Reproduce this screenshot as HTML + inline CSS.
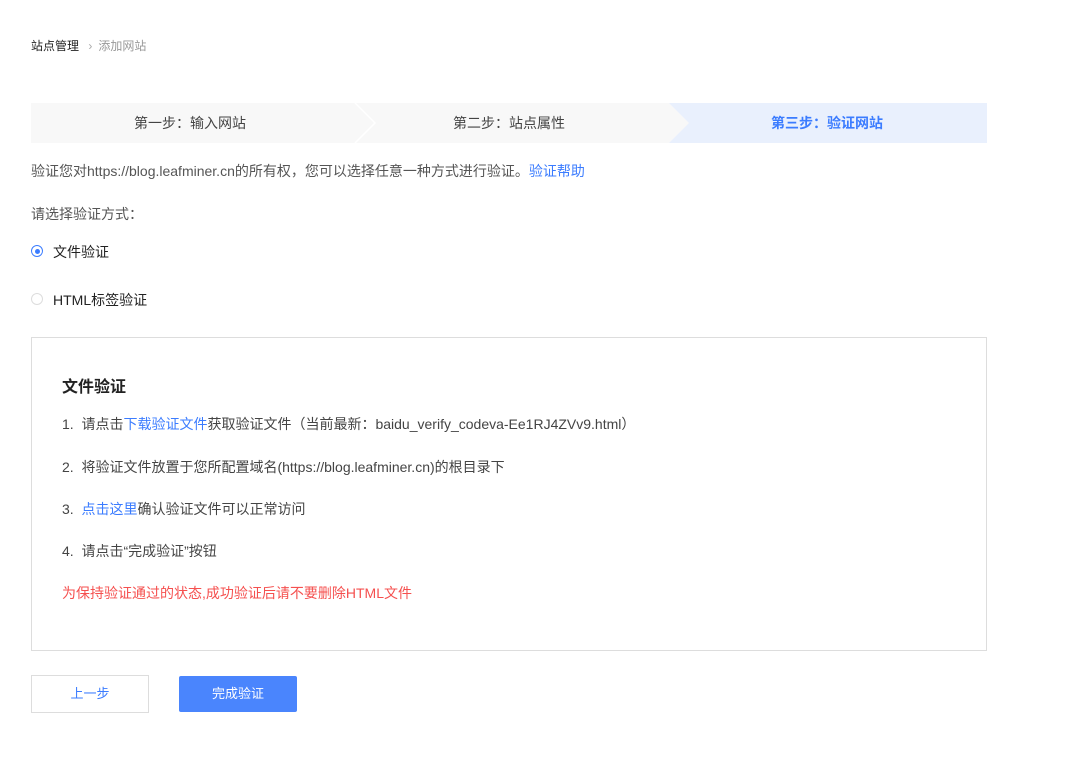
<!DOCTYPE html>
<html><head><meta charset="utf-8"><style>
body{margin:0;background:#fff;font-family:"Liberation Sans","Noto Sans CJK SC",sans-serif;font-size:14px;color:#333;width:1077px;height:770px;position:relative;overflow:hidden}
.a{position:absolute;white-space:nowrap}
.blue{color:#3b7cff}
</style></head><body>
<div class="a" style="left:31px;top:37px;font-size:12px;color:#222">站点管理 <span style="color:#aaa;margin:0 6px">›</span><span style="color:#999">添加网站</span></div>
<svg class="a" style="left:31px;top:103px" width="956" height="40">
<rect x="0" y="0" width="956" height="40" fill="#f8f8f8"/>
<polygon points="638,0 956,0 956,40 638,40 658,20" fill="#e9f0fd"/>
<polyline points="324,0 344,20 324,40" fill="none" stroke="#fff" stroke-width="1.5"/>
<text x="159" y="25" text-anchor="middle" font-size="14" fill="#444" font-family="Liberation Sans,Noto Sans CJK SC,sans-serif">第一步：输入网站</text>
<text x="478" y="25" text-anchor="middle" font-size="14" fill="#444" font-family="Liberation Sans,Noto Sans CJK SC,sans-serif">第二步：站点属性</text>
<text x="796" y="25" text-anchor="middle" font-size="14" fill="#3b7cff" font-weight="bold" font-family="Liberation Sans,Noto Sans CJK SC,sans-serif">第三步：验证网站</text>
</svg>
<div class="a" style="left:31px;top:161px;color:#555">验证您对https://blog.leafminer.cn的所有权，您可以选择任意一种方式进行验证。<span class="blue">验证帮助</span></div>
<div class="a" style="left:31px;top:204px;color:#555">请选择验证方式：</div>
<div class="a" style="left:31px;top:245px;width:12px;height:12px;border:1px solid #3b7cff;border-radius:50%;box-sizing:border-box"><div style="position:absolute;left:2.5px;top:2.5px;width:5px;height:5px;border-radius:50%;background:#3b7cff"></div></div>
<div class="a" style="left:53px;top:242px;color:#222">文件验证</div>
<div class="a" style="left:31px;top:293px;width:12px;height:12px;border:1px solid #ddd;border-radius:50%;box-sizing:border-box"></div>
<div class="a" style="left:53px;top:290px;color:#222">HTML标签验证</div>
<div class="a" style="left:31px;top:337px;width:956px;height:314px;border:1px solid #ddd;box-sizing:border-box"></div>
<div class="a" style="left:62px;top:373px;font-size:16px;font-weight:bold;color:#222">文件验证</div>
<div class="a" style="left:62px;top:414px;color:#444">1.&nbsp; 请点击<span class="blue">下载验证文件</span>获取验证文件（当前最新：baidu_verify_codeva-Ee1RJ4ZVv9.html）</div>
<div class="a" style="left:62px;top:457px;color:#444">2.&nbsp; 将验证文件放置于您所配置域名(https://blog.leafminer.cn)的根目录下</div>
<div class="a" style="left:62px;top:499px;color:#444">3.&nbsp; <span class="blue">点击这里</span>确认验证文件可以正常访问</div>
<div class="a" style="left:62px;top:541px;color:#444">4.&nbsp; 请点击“完成验证”按钮</div>
<div class="a" style="left:62px;top:583px;color:#f5504f">为保持验证通过的状态,成功验证后请不要删除HTML文件</div>
<div class="a" style="left:31px;top:675px;width:118px;height:38px;border:1px solid #ddd;box-sizing:border-box;text-align:center;line-height:36px;color:#3b7cff;font-size:13px">上一步</div>
<div class="a" style="left:179px;top:676px;width:118px;height:36px;background:#4a85fd;border-radius:2px;text-align:center;line-height:36px;color:#fff;font-size:13px">完成验证</div>
</body></html>
